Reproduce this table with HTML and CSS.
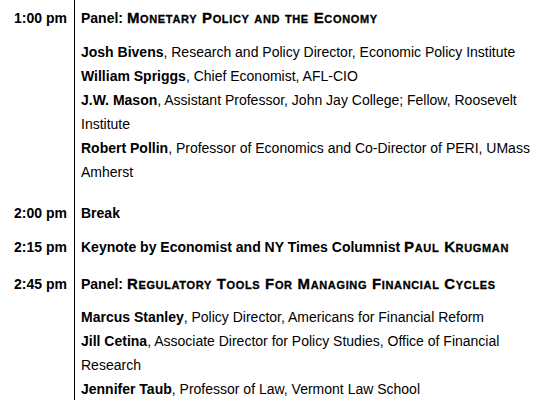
FILE: index.html
```html
<!DOCTYPE html>
<html>
<head>
<meta charset="utf-8">
<link rel="stylesheet" href="styles.css">
</head>
<body>
<div class="agenda">
  <div class="time r1">1:00 pm</div>
  <div class="item r1">
    <p class="head">Panel: <span class="sc">Monetary Policy and the Economy</span></p>
    <div class="people">
      <p><b>Josh Bivens</b>, Research and Policy Director, Economic Policy Institute</p>
      <p><b>William Spriggs</b>, Chief Economist, AFL-CIO</p>
      <p><b>J.W. Mason</b>, Assistant Professor, John Jay College; Fellow, Roosevelt Institute</p>
      <p><b>Robert Pollin</b>, Professor of Economics and Co-Director of PERI, UMass Amherst</p>
    </div>
  </div>

  <div class="time r2">2:00 pm</div>
  <div class="item r2"><p class="head">Break</p></div>

  <div class="time r3">2:15 pm</div>
  <div class="item r3"><p class="head">Keynote by Economist and NY Times Columnist <span class="sc">Paul Krugman</span></p></div>

  <div class="time r4">2:45 pm</div>
  <div class="item r4">
    <p class="head">Panel: <span class="sc">Regulatory Tools For Managing Financial Cycles</span></p>
    <div class="people">
      <p><b>Marcus Stanley</b>, Policy Director, Americans for Financial Reform</p>
      <p><b>Jill Cetina</b>, Associate Director for Policy Studies, Office of Financial Research</p>
      <p><b>Jennifer Taub</b>, Professor of Law, Vermont Law School</p>
    </div>
  </div>
</div>
</body>
</html>
```

FILE: styles.css
```css
html, body {
  margin: 0;
  padding: 0;
  background: #fff;
}
body {
  font-family: "Liberation Sans", Arial, sans-serif;
  font-size: 14px;
  line-height: 24px;
  color: #000;
}
.agenda {
  display: grid;
  grid-template-columns: 74px 465px;
}
.time {
  font-weight: bold;
  text-align: right;
  padding-right: 7px;
  white-space: nowrap;
}
.item {
  border-left: 1px solid #000;
  padding-left: 6px;
}
p {
  margin: 0;
}
.head {
  font-weight: bold;
}
.sc {
  font-size: 15px;
  font-variant: small-caps;
  font-weight: 900;
  letter-spacing: 0.65px;
  -webkit-text-stroke: 0.3px #000;
}
.people {
  margin-top: 10px;
}
.r1 { padding-top: 6px; padding-bottom: 17px; }
.r2 { padding-bottom: 10px; }
.r3 { padding-bottom: 13px; }
.r4 { padding-bottom: 10px; }
.r4 .people { margin-top: 9px; }
```
